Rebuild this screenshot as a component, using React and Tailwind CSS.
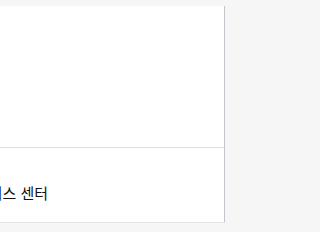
export default function App() {
  return (
    <div className="h-[232px] w-full overflow-hidden bg-[#f6f6f7] pt-[6px]">
      <div className="flex h-[216px] w-[225px] flex-col border-r border-[#c3c6cd] bg-white shadow-[0_1px_0_#e4e4e6]">
        <div className="h-[142px] border-b border-[#dcdde0]" />
        <div className="flex-1 overflow-hidden pt-[36px]">
          <p className="ml-[-25px] whitespace-nowrap text-[15px] leading-5 text-[#111] [font-family:'Liberation_Sans','Noto_Sans_CJK_KR',sans-serif]">
            서비스 센터
          </p>
        </div>
      </div>
    </div>
  );
}
